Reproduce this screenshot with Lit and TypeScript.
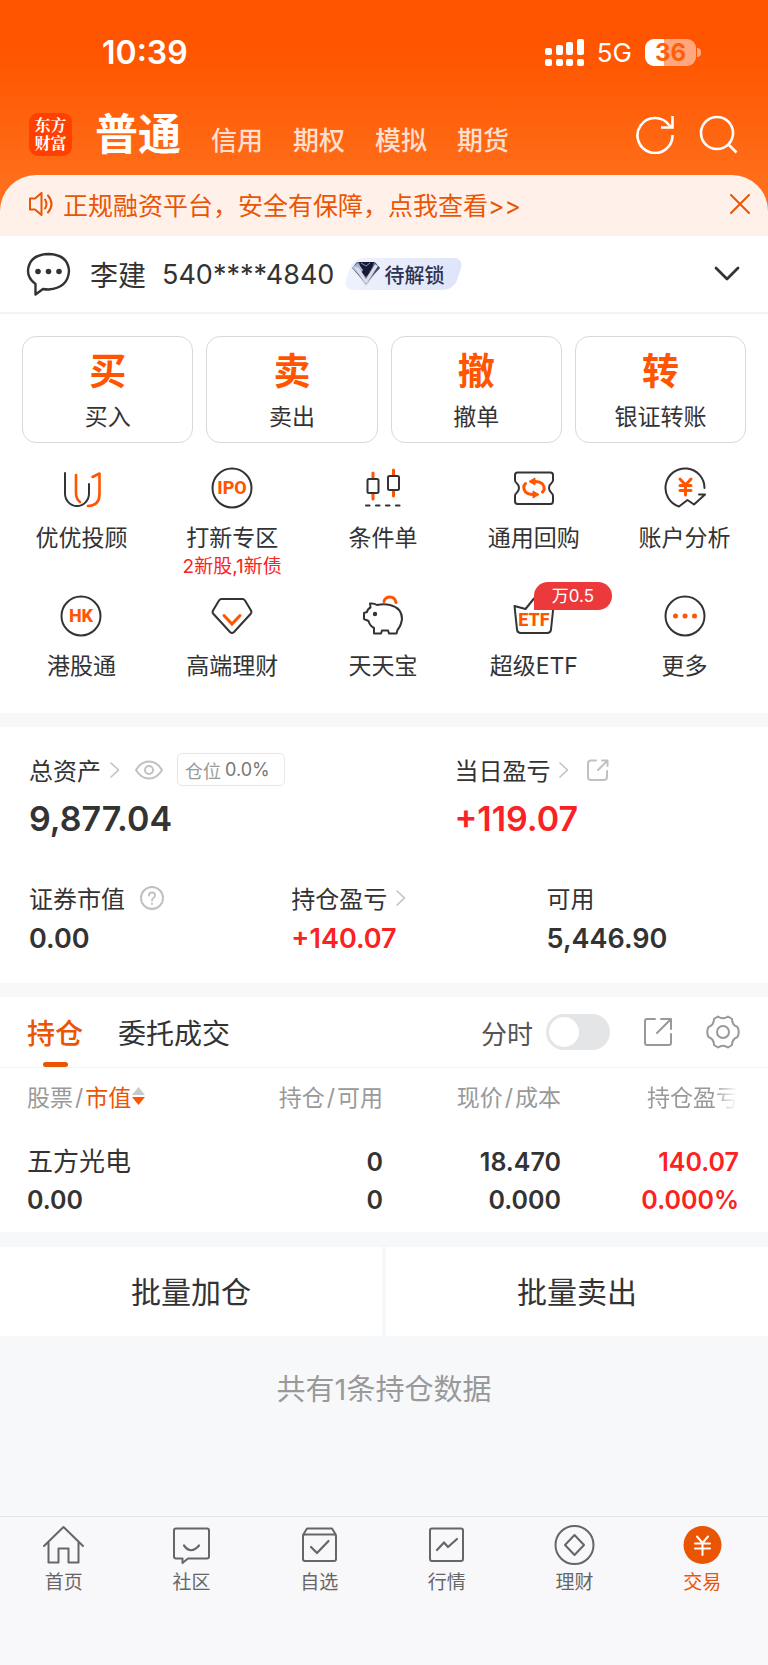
import { LitElement, html, css, svg } from "lit";
import { customElement, property, state } from "lit/decorators.js";
import { classMap } from "lit/directives/class-map.js";

const icons: Record<string, unknown> = {
  youyou: svg`<g fill="none" stroke-width="2" stroke-linecap="round" stroke-linejoin="round">
    <path stroke="#333" d="M5 6V26.500A12 12.500 0 0 0 29 26.500V17"/>
    <path stroke="#ff5500" stroke-width="2.600" d="M16 8V26Q16 32 20 35M32.500 10 39.500 6.500V27Q39.500 38.500 28 39"/></g>`,
  ipo: svg`<circle cx="21" cy="21" r="19.500" fill="none" stroke="#333" stroke-width="2"/>
    <text x="21" y="27" class="mark" text-anchor="middle">IPO</text>`,
  cond: svg`<g fill="none" stroke-linecap="round"><path stroke="#ff5500" stroke-width="3" d="M11 6V11M11 27V32M31.500 3V8M31.500 24V29"/>
    <rect x="5.500" y="12" width="11" height="14" rx="1.500" stroke="#333" stroke-width="2"/>
    <rect x="26" y="9" width="11" height="14" rx="1.500" stroke="#333" stroke-width="2"/>
    <path stroke="#333" stroke-width="2.200" d="M4 38.500h3.500M14 38.500h3.500M24 38.500h3.500M34 38.500h3.500"/></g>`,
  repo: svg`<path fill="none" stroke="#333" stroke-width="2" stroke-linejoin="round" d="M4.500 5.500H37.500Q40 5.500 40 8V13Q40 15 38.500 16Q36 18 36 21T38.500 26Q40 27 40 29V34Q40 37 37.500 37H4.500Q2 37 2 34V29Q2 27 3.500 26Q6 24 6 21T3.500 16Q2 15 2 13V8Q2 5.500 4.500 5.500Z"/>
    <g fill="none" stroke="#ff5500" stroke-width="3" stroke-linecap="round"><path d="M12.500 16.500Q9 20 12.500 25Q15 27.500 20 27.500M29.500 25Q33 22 29.500 17Q27 14.500 22 14.500"/></g>
    <path fill="#ff5500" stroke="#ff5500" stroke-linejoin="round" d="M22 11V18L16 14.500ZM20 24V31L26 27.500Z"/>`,
  analysis: svg`<path fill="none" stroke="#333" stroke-width="2" stroke-linejoin="round" stroke-linecap="round" d="M40.500 21A19.500 19.500 0 1 0 15 39.500L23.500 33 30 37.500 41 27.500H35"/>
    <path fill="none" stroke="#ff5500" stroke-width="3" stroke-linecap="round" d="M16 12l5.500 6 5.500-6M21.500 18V28M16 18.500h11M16 23.500h11"/>`,
  hk: svg`<circle cx="21" cy="21" r="19.500" fill="none" stroke="#333" stroke-width="2"/>
    <text x="21" y="27" class="mark" text-anchor="middle">HK</text>`,
  wealth: svg`<path fill="none" stroke="#333" stroke-width="2" stroke-linejoin="round" d="M10.500 4H31.500Q33 4 34 5.500L40 15.500Q41 17.500 39.500 19L23 37Q21 39 19 37L2.500 19Q1 17.500 2 15.500L8 5.500Q9 4 10.500 4Z"/>
    <path fill="none" stroke="#ff5500" stroke-width="3" stroke-linecap="round" d="M13 20.500 21 29 29 20.500"/>`,
  pig: svg`<path fill="none" stroke="#333" stroke-width="2" stroke-linejoin="round" d="M8 8.500Q12 8 15 10Q22 8.500 28 10Q40 13 40 24Q39 31 35.500 35L34.500 38.500H27L26 35.500H20L19 38.500H12V33Q8 31 6.500 26L2 24V18L5 17Q5.500 14 8.500 12.500Z"/>
    <path fill="none" stroke="#ff5500" stroke-width="3" stroke-linecap="round" d="M22 6.500Q23 2 28 2T34 7.500"/><circle cx="13" cy="19" r="2.200" fill="#333"/>`,
  etf: svg`<path fill="none" stroke="#333" stroke-width="2" stroke-linejoin="round" d="M1.500 11 12.500 14 21 3.500 29.500 14 40.500 11 38 34.500Q37.500 38 34 38H8Q4.500 38 4 34.500Z"/>
    <text x="21" y="31" class="mark" text-anchor="middle">ETF</text>`,
  more: svg`<circle cx="21" cy="21" r="19.500" fill="none" stroke="#333" stroke-width="2"/>
    <g fill="#ff5500"><circle cx="11.500" cy="21" r="2.500"/><circle cx="21" cy="21" r="2.500"/><circle cx="30.500" cy="21" r="2.500"/></g>`,
  home: svg`<path d="M1 21 20.500 2 40 21M5.500 17V37.500H15.500V23.500H25.500V37.500H35.500V17"/>`,
  community: svg`<path d="M5 3.500H36Q38 3.500 38 5.500V31.500Q38 33.500 36 33.500H17L11.500 38V33.500H5Q3 33.500 3 31.500V5.500Q3 3.500 5 3.500Z"/><path stroke-width="2.200" d="M13 20.500Q20 30 28 20.500"/>`,
  watch: svg`<path d="M4 10 8 3.500H33L37 10M6 9.500H35Q37 9.500 37 11.500V34Q37 36 35 36H6Q4 36 4 34V11.500Q4 9.500 6 9.500Z"/><path stroke-width="2.200" d="M12 22 18 28 29.500 16"/>`,
  market: svg`<rect x="4" y="3.500" width="33" height="32.500" rx="2"/><path stroke-width="2.200" d="M11 25 18 17.500 22 22 31 14"/>`,
  finance: svg`<circle cx="20.500" cy="20" r="19"/><path d="M20.500 10 30 20 20.500 30 11 20Z"/>`,
  trade: svg`<circle cx="20.500" cy="20" r="19" fill="#ea5504" stroke="none"/><path stroke="#fff" stroke-width="2" d="M15 11.500 20.500 18 26 11.500M20.500 18V30M13 18.500H28M13 23.500H28"/>`,
};

@customElement("trade-entry")
class TradeEntry extends LitElement {
  @property() label = "";
  @property() icon = "";
  @property() note = "";
  @property() badge = "";
  static styles = css`
    :host { display: block; min-width: 0; }
    .entry { position: relative; display: flex; flex-direction: column; align-items: center; width: 100%; padding: 0; border: 0; background: none; color: #333; font-family: inherit; font-size: 23px; line-height: 34px; white-space: nowrap; }
    .pic { width: 42px; height: 42px; margin-bottom: 12px; }
    .mark { font-family: Roboto, sans-serif; font-size: 18px; font-weight: 800; fill: #ff5500; }
    .note { font-size: 19px; line-height: 24px; color: #fa2222; }
    .badge { position: absolute; top: -13px; left: 50%; padding: 0 18px; border-radius: 14px 14px 14px 0; background: #ec3a3c; color: #fff; font-size: 17px; line-height: 28px; }
  `;
  render() {
    return html`<button class="entry">
      <svg class="pic" viewBox="0 0 42 42" aria-hidden="true">${icons[this.icon]}</svg>
      <span>${this.label}</span>
      ${this.note ? html`<span class="note">${this.note}</span>` : ""}
      ${this.badge ? html`<span class="badge">${this.badge}</span>` : ""}
    </button>`;
  }
}

@customElement("app-root")
class AppRoot extends LitElement {
  @state() private noticeOpen = true;
  @state() private minute = false;

  private accounts = ["普通", "信用", "期权", "模拟", "期货"];
  private actions = [["买", "买入"], ["卖", "卖出"], ["撤", "撤单"], ["转", "银证转账"]];
  private entries = [
    { label: "优优投顾", icon: "youyou" },
    { label: "打新专区", icon: "ipo", note: "2新股,1新债" },
    { label: "条件单", icon: "cond" },
    { label: "通用回购", icon: "repo" },
    { label: "账户分析", icon: "analysis" },
    { label: "港股通", icon: "hk" },
    { label: "高端理财", icon: "wealth" },
    { label: "天天宝", icon: "pig" },
    { label: "超级ETF", icon: "etf", badge: "万0.5" },
    { label: "更多", icon: "more" },
  ] as { label: string; icon: string; note?: string; badge?: string }[];
  private nav = [["首页", "home"], ["社区", "community"], ["自选", "watch"], ["行情", "market"], ["理财", "finance"], ["交易", "trade"]];

  static styles = css`
    :host { display: flex; flex-direction: column; min-height: 100vh; background: #f7f8fa; color: #333; font-family: Inter, "Noto Sans CJK SC", sans-serif; font-size: 24px; overflow-x: hidden; }
    * { box-sizing: border-box; }
    button { padding: 0; border: 0; background: none; color: inherit; font: inherit; white-space: nowrap; }
    a { color: inherit; text-decoration: none; }
    svg { display: block; flex: none; }
    .spacer { flex: 1; }
    .line { fill: none; stroke: currentColor; stroke-width: 2; stroke-linecap: round; stroke-linejoin: round; }

    .top { background: linear-gradient(#ff5500 50px, #ff6e1a 180px); color: #fff; }
    .status { display: flex; align-items: center; height: 104px; padding: 0 67px 0 102px; }
    .clock { font-size: 32px; font-weight: 600; }
    .net { margin: 0 13px; font-size: 26px; }
    .battery { width: 51px; height: 27px; border-radius: 9px; background: linear-gradient(90deg, #fff 37%, #ffa880 37%); color: #ff5f0a; font-size: 24px; font-weight: 700; line-height: 27px; text-align: center; }
    .nub { width: 4px; height: 9px; margin-left: 1px; border-radius: 0 4px 4px 0; background: #ffa880; }
    .bar { display: flex; align-items: center; height: 60px; padding: 0 30px 0 29px; }
    .logo { display: grid; place-content: center; width: 43px; height: 43px; border-radius: 9px; background: #ff4000; font-family: "Noto Serif CJK SC", "Noto Sans CJK SC", serif; font-size: 16px; font-weight: 700; line-height: 18px; }
    .logo span { width: 2em; }
    .accounts { display: flex; align-items: baseline; gap: 30px; margin-left: 23px; padding-top: 6px; }
    .account { color: #ffdfcf; font-size: 26px; font-weight: 500; line-height: 60px; }
    .account.on { color: #fff; font-size: 43px; font-weight: 700; }
    .tools { display: flex; gap: 24px; }
    .notice { display: flex; align-items: center; height: 61px; margin-top: 11px; padding: 0 18px 3px 28px; border-radius: 36px 36px 0 0; background: #fff1ea; color: #ea5504; font-size: 25px; }
    .notice .words { margin-left: 9px; }

    .panel { background: #fff; }
    .holder { display: flex; align-items: center; height: 78px; padding: 0 28px 0 26px; border-bottom: 2px solid #f2f3f5; font-size: 27px; }
    .name { margin: 0 16px 0 18px; font-size: 28px; }
    .level { position: relative; z-index: 0; display: flex; align-items: center; gap: 3px; height: 32px; margin-left: 9px; padding: 0 20px 0 8px; color: #2c3352; font-size: 20px; font-weight: 500; }
    .level::before { content: ""; position: absolute; z-index: -1; inset: 0 5px; border-radius: 10px; background: linear-gradient(90deg, #eef2fd, #dfe5f9); transform: skewX(-18deg); }
    .actions { display: grid; grid-template-columns: repeat(4, 1fr); gap: 13px; padding: 22px 22px 24px; }
    .action { display: flex; flex-direction: column; align-items: center; gap: 10px; padding: 15px 0 10px; border: 1px solid #d8d9db; border-radius: 14px; }
    .glyph { color: #ff5500; font-size: 37px; font-weight: 700; line-height: 40px; }
    .caption { font-size: 23px; line-height: 30px; }
    .entries { display: grid; grid-template-columns: repeat(5, 1fr); gap: 16px 0; padding: 0 8px 30px 6px; }

    .assets { margin-top: 14px; padding: 27px 30px 26px 29px; }
    .main { display: grid; grid-template-columns: 3fr 2fr; margin-bottom: 43px; }
    .rest { display: grid; grid-template-columns: 37fr 36fr 27fr; }
    .label { display: flex; align-items: center; height: 34px; padding-bottom: 3px; white-space: nowrap; }
    .label svg { color: #bfc1c4; }
    .arrow { margin-left: 9px; }
    .after { margin-left: 15px; }
    .ratio { display: flex; align-items: center; gap: 4px; height: 33px; margin-left: 14px; padding: 0 14px 0 7px; border: 1px solid #e6e7e9; border-radius: 5px; color: #777; font-size: 18px; }
    .ratio span { color: #999; }
    .big { margin-top: 11px; font-size: 34px; font-weight: 600; line-height: 40px; }
    .mid { margin-top: 5px; font-size: 27px; font-weight: 600; line-height: 36px; }
    .up { color: #fa2222; }

    .holdings { margin-top: 14px; }
    .tabs { display: flex; align-items: center; height: 71px; padding: 0 28px 0 27px; border-bottom: 1px solid #f2f3f5; }
    .tab { position: relative; margin-right: 35px; padding-top: 4px; font-size: 28px; line-height: 66px; }
    .tab.on { color: #ea5504; font-weight: 500; }
    .tab.on::after { content: ""; position: absolute; left: 50%; bottom: 0; width: 25px; height: 5px; margin-left: -12px; border-radius: 3px; background: #ea5504; }
    .minute { display: flex; align-items: center; gap: 13px; color: #555; font-size: 26px; }
    .toggle { appearance: none; width: 64px; height: 36px; margin: 0; padding: 3px; border-radius: 18px; background: #e4e5e7; }
    .toggle::before { content: ""; display: block; width: 30px; height: 30px; border-radius: 15px; background: #fff; }
    .toggle:checked { background: #ea5504; }
    .toggle:checked::before { margin-left: 28px; }
    .icon { margin-left: 33px; color: #999; }
    .table-wrap { padding: 0 29px 0 27px; }
    table { width: 100%; table-layout: fixed; border-collapse: collapse; }
    th { height: 60px; padding: 0 0 5px; color: #999; font-size: 23px; font-weight: 400; text-align: right; white-space: nowrap; }
    td { padding: 15px 0 13px; font-size: 25px; font-weight: 600; line-height: 38px; text-align: right; white-space: nowrap; }
    th:first-child, td:first-child { text-align: left; }
    .stock { font-size: 26px; font-weight: 400; }
    .slash { margin: 0 2px; }
    .sort { display: inline-flex; align-items: center; gap: 1px; color: #ea5504; }
    .fade { display: inline-block; mask-image: linear-gradient(90deg, #000 72%, transparent 98%); -webkit-mask-image: linear-gradient(90deg, #000 72%, transparent 98%); }
    .batch { display: grid; grid-template-columns: 1fr 1fr; gap: 4px; margin-top: 15px; }
    .batch button { height: 89px; padding-bottom: 4px; background: #fff; font-size: 30px; }
    .count { margin: 0; padding: 34px 0; color: #999; font-size: 29px; line-height: 40px; text-align: center; }

    .nav { display: grid; grid-template-columns: repeat(6, 1fr); margin-top: auto; padding: 8px 2px 69px 0; border-top: 1px solid #e6e7e9; background: #f8f8fb; }
    .item { display: flex; flex-direction: column; align-items: center; gap: 5px; color: #666; font-size: 19px; line-height: 26px; }
    .item.on { color: #ea5504; }
  `;

  private arrow() {
    return html`<svg class="arrow line" width="10" height="16" viewBox="0 0 10 16"><path stroke-width="1.600" d="M1 1 8.500 8 1 15" /></svg>`;
  }

  render() {
    return html`
      <header class="top">
        <div class="status">
          <span class="clock">10:39</span><span class="spacer"></span>
          <svg width="39" height="27" viewBox="0 0 39 27" fill="#fff">
            <rect x="0" y="9" width="7" height="7" rx="2" /><rect x="11" y="6" width="7" height="10" rx="2" /><rect x="21" y="3" width="7" height="13" rx="2" /><rect x="32" y="0" width="7" height="16" rx="2" />
            <rect x="0" y="20" width="7" height="7" rx="2" /><rect x="11" y="20" width="7" height="7" rx="2" /><rect x="21" y="20" width="7" height="7" rx="2" /><rect x="32" y="20" width="7" height="7" rx="2" />
          </svg>
          <span class="net">5G</span><span class="battery">36</span><span class="nub"></span>
        </div>
        <div class="bar">
          <div class="logo"><span>东方财富</span></div>
          <nav class="accounts">
            ${this.accounts.map((a, i) => html`<button class=${classMap({ account: true, on: i === 0 })}>${a}</button>`)}
          </nav>
          <span class="spacer"></span>
          <div class="tools">
            <button aria-label="刷新"><svg width="39" height="39" viewBox="0 0 39 39" fill="none" stroke="#fff" stroke-width="2.600"><path d="M36.500 20A17.500 17.500 0 1 1 33 10L36 13M36.500 1V12.500H25" /></svg></button>
            <button aria-label="搜索"><svg width="39" height="39" viewBox="0 0 39 39" fill="none" stroke="#fff" stroke-width="2.600"><circle cx="18" cy="18" r="16" /><path d="M29 29 37.500 37.500" /></svg></button>
          </div>
        </div>
        ${this.noticeOpen ? html`<div class="notice">
          <svg class="line" width="26" height="26" viewBox="0 0 26 26"><path d="M2 7.500H7L13.500 2V24L7 18.500H2ZM17 8.500Q20 13 17 17.500M20 4.500Q27 13 20 21.500" /></svg>
          <a class="words" href="#">正规融资平台，安全有保障，点我查看&gt;&gt;</a>
          <span class="spacer"></span>
          <button aria-label="关闭" @click=${() => (this.noticeOpen = false)}><svg class="line" width="20" height="20" viewBox="0 0 20 20"><path d="M1 1 19 19M19 1 1 19" /></svg></button>
        </div>` : ""}
      </header>

      <section class="panel">
        <div class="holder">
          <svg width="46" height="46" viewBox="0 0 46 46" fill="none" stroke="#333" stroke-width="2.400" stroke-linejoin="round"><path d="M9.500 33Q2 27.500 2 20Q3 3.500 22.500 3Q42 3.500 43 20Q42 37 22.500 38.500Q19 38.500 17 38L9.500 43.500Z" /><g fill="#333" stroke="none"><circle cx="12" cy="20.500" r="2.800" /><circle cx="22.500" cy="20.500" r="2.800" /><circle cx="33" cy="20.500" r="2.800" /></g></svg>
          <span class="name">李建</span><span>540****4840</span>
          <span class="level">
            <svg width="30" height="30" viewBox="0 0 30 30">
              <defs><linearGradient id="tip" x2="0" y2="1"><stop stop-color="#a8aabb" /><stop offset="1" stop-color="#edf0fb" /></linearGradient></defs>
              <path d="M9 17 15 29 21 17Z" fill="url(#tip)" />
              <path d="M6 3H24L29 9 15 25 1 9Z" fill="#66708f" /><path d="M8 3H23L20 12 15 18 10 12Z" fill="#141a35" />
              <path d="M1 9 7 4 12 11 9 16Z" fill="#a9b5d4" /><path d="M29 9 24 4 18 13 21 16Z" fill="#414766" />
              <path d="M2 7 8 9 15 20 24 5 27 7 16 24H14Z" fill="#dadde9" /><path d="M10 4 15 7 19 4" fill="none" stroke="#8290bd" />
            </svg>
            待解锁
          </span>
          <span class="spacer"></span>
          <button aria-label="展开"><svg class="line" width="26" height="16" viewBox="0 0 26 16"><path stroke-width="2.800" d="M2 2 13 13 24 2" /></svg></button>
        </div>
        <div class="actions">
          ${this.actions.map(([g, c]) => html`<button class="action"><span class="glyph">${g}</span><span class="caption">${c}</span></button>`)}
        </div>
        <div class="entries">
          ${this.entries.map((e) => html`<trade-entry .label=${e.label} .icon=${e.icon} .note=${e.note ?? ""} .badge=${e.badge ?? ""}></trade-entry>`)}
        </div>
      </section>

      <section class="panel assets">
        <div class="main">
          <div>
            <div class="label">总资产${this.arrow()}
              <svg class="after line" width="28" height="20" viewBox="0 0 28 20"><path d="M1 10Q6 1.500 14 1.500T27 10Q22 18.500 14 18.500T1 10Z" /><circle cx="14" cy="10" r="4" /></svg>
              <div class="ratio"><span>仓位</span>0.0%</div>
            </div>
            <div class="big">9,877.04</div>
          </div>
          <div>
            <div class="label">当日盈亏${this.arrow()}
              <svg class="after line" width="28" height="22" viewBox="0 0 28 22"><path d="M12 1.500H7Q4 1.500 4 4.500V18Q4 21 7 21H20Q23 21 23 18V12M18 1.500H23.500V7M23 2 14 11" /></svg>
            </div>
            <div class="big up">+119.07</div>
          </div>
        </div>
        <div class="rest">
          <div>
            <div class="label">证券市值
              <svg class="after line" width="24" height="24" viewBox="0 0 24 24"><circle cx="12" cy="12" r="11" /><path stroke-width="1.800" d="M9 9.500Q9 6.500 12 6.500T15 9.500Q15 11 13.500 12T12 14.500M12 17.500V18" /></svg>
            </div>
            <div class="mid">0.00</div>
          </div>
          <div><div class="label">持仓盈亏${this.arrow()}</div><div class="mid up">+140.07</div></div>
          <div><div class="label">可用</div><div class="mid">5,446.90</div></div>
        </div>
      </section>

      <section class="panel holdings">
        <div class="tabs">
          <button class="tab on">持仓</button><button class="tab">委托成交</button>
          <span class="spacer"></span>
          <label class="minute">分时<input class="toggle" type="checkbox" .checked=${this.minute} @change=${() => (this.minute = !this.minute)} /></label>
          <button class="icon" aria-label="导出"><svg class="line" width="30" height="30" viewBox="0 0 30 30"><path d="M12 2H4Q2 2 2 4V26Q2 28 4 28H26Q28 28 28 26V17M18 2H28V12M27 3 14 16" /></svg></button>
          <button class="icon" aria-label="设置"><svg class="line" width="34" height="34" viewBox="0 0 34 34"><circle cx="17" cy="17" r="6" /><path d="M12 1.500Q17 5 22 1.500L26 4Q26 10 31.500 12Q34 17 31.500 22Q26 24 26 30L22 32.500Q17 29 12 32.500L8 30Q8 24 2.500 22Q0 17 2.500 12Q8 10 8 4Z" /></svg></button>
        </div>
        <div class="table-wrap">
          <table>
            <thead><tr>
              <th scope="col">股票<span class="slash">/</span><button class="sort">市值<svg width="13" height="20" viewBox="0 0 13 20"><path d="M6.500 1 13 9H0Z" fill="#c8c9cb" /><path d="M6.500 19 13 11H0Z" fill="#ff5500" /></svg></button></th>
              <th scope="col">持仓<span class="slash">/</span>可用</th><th scope="col">现价<span class="slash">/</span>成本</th><th scope="col"><span class="fade">持仓盈亏</span></th>
            </tr></thead>
            <tbody><tr>
              <td><div class="stock">五方光电</div><div>0.00</div></td>
              <td><div>0</div><div>0</div></td>
              <td><div>18.470</div><div>0.000</div></td>
              <td class="up"><div>140.07</div><div>0.000%</div></td>
            </tr></tbody>
          </table>
        </div>
      </section>

      <div class="batch"><button>批量加仓</button><button>批量卖出</button></div>
      <p class="count">共有1条持仓数据</p>

      <nav class="nav">
        ${this.nav.map(([label, icon]) => html`<a href="#" class=${classMap({ item: true, on: icon === "trade" })}><svg class="line" width="41" height="40" viewBox="0 0 41 40">${icons[icon]}</svg>${label}</a>`)}
      </nav>
    `;
  }
}
